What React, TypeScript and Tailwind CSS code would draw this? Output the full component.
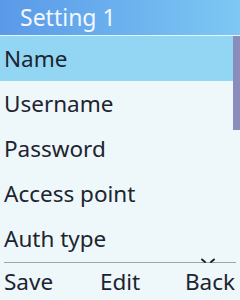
import React from 'react';

const items = ['Name', 'Username', 'Password', 'Access point', 'Auth type'];

export default function App() {
  return (
    <div
      className="w-[240px] h-[300px] flex flex-col overflow-hidden bg-[#eef7fa] text-[#1c2430]"
      style={{ fontFamily: '"Noto Sans", "Open Sans", sans-serif' }}
    >
      {/* Title bar */}
      <div className="h-[36px] shrink-0 flex items-center pl-[20px] bg-gradient-to-r from-[#5a99e8] to-[#7dc8f4] text-[#f2f8ff] text-[23px] border-b border-[#e8f6fb]">
        Setting 1
      </div>

      {/* List */}
      <div className="relative flex-1 flex flex-col">
        {items.map((label, i) => (
          <div
            key={label}
            className={`h-[45px] shrink-0 flex items-center pl-[4px] text-[22.5px] ${
              i === 0 ? 'bg-[#93d6f4]' : ''
            }`}
          >
            {label}
          </div>
        ))}
        <div className="absolute right-0 top-0 w-[7px] h-[94px] bg-[#8a8cbc]" />
      </div>

      {/* Soft keys */}
      <div className="relative shrink-0 mx-[4px] border-t border-[#9aa3ae]">
        <svg
          className="absolute left-[196px] top-[-5px]"
          width="16"
          height="6"
          viewBox="0 0 16 6"
        >
          <path d="M2 1.5 L5 4" stroke="#1c2430" strokeWidth="2" strokeLinecap="round" />
          <path d="M14 1.5 L11 4" stroke="#1c2430" strokeWidth="2" strokeLinecap="round" />
        </svg>
      </div>
      <div className="h-[37px] shrink-0 flex items-center justify-between pl-[4px] pr-[5px] text-[22.5px]">
        <span>Save</span>
        <span className="ml-[2px]">Edit</span>
        <span>Back</span>
      </div>
    </div>
  );
}
